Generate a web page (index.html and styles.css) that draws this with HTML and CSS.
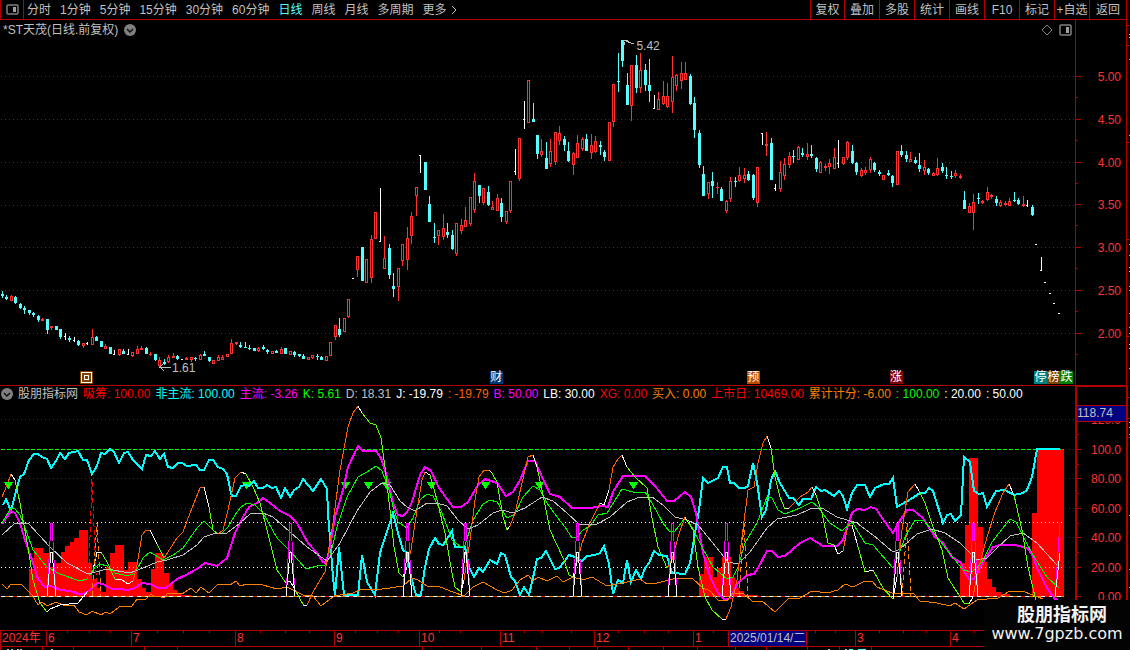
FILE: index.html
```html
<!DOCTYPE html>
<html lang="zh-CN">
<head>
  <meta charset="UTF-8">
  <title>*ST天茂 日线</title>
  <link rel="stylesheet" href="styles.css">
</head>
<body>
  <div class="app">
    <main class="main">
      <nav class="toolbar">
        <button class="layout-btn" aria-label="布局">
          <svg width="13" height="11" viewBox="0 0 13 11"><rect x="1" y="1" width="11" height="9" rx="1" fill="none" stroke="#808080" stroke-width="1.5"/><rect x="7" y="3" width="3" height="5" fill="#a0a0a0"/></svg>
        </button>
        <div class="periods">
          <button>分时</button>
          <button>1分钟</button>
          <button>5分钟</button>
          <button>15分钟</button>
          <button>30分钟</button>
          <button>60分钟</button>
          <button class="active">日线</button>
          <button>周线</button>
          <button>月线</button>
          <button>多周期</button>
          <button class="more">更多
            <svg width="6" height="10" viewBox="0 0 6 10"><path d="M1 1l4 4-4 4" fill="none" stroke="#c0c0c0"/></svg>
          </button>
        </div>
        <div class="tools">
          <button>复权</button>
          <button>叠加</button>
          <button>多股</button>
          <button>统计</button>
          <button>画线</button>
          <button>F10</button>
          <button>标记</button>
          <button>+自选</button>
          <button>返回</button>
        </div>
      </nav>

      <div class="title-row">
        <div class="title">
          <h1>*ST天茂(日线.前复权)</h1>
          <button class="round" aria-label="展开">
            <svg width="12" height="12" viewBox="0 0 12 12"><circle cx="6" cy="6" r="6" fill="#808080"/><path d="M3 5l3 3 3-3" fill="none" stroke="#101010" stroke-width="1.5"/></svg>
          </button>
          <div class="title-icons">
            <svg width="12" height="12" viewBox="0 0 12 12"><path d="M6 1l5 5-5 5-5-5z" fill="none" stroke="#808080"/></svg>
            <svg width="13" height="12" viewBox="0 0 13 12"><rect x="1" y="1" width="11" height="10" rx="1" fill="none" stroke="#808080" stroke-width="1.5"/><rect x="7" y="3" width="3" height="6" fill="#a0a0a0"/></svg>
          </div>
        </div>
        <div></div>
      </div>

      <section class="panel">
        <div class="plot">
          <svg id="kline" class="kline" viewBox="0 38 1075 347" preserveAspectRatio="none"></svg>
          <span class="note high">5.42</span>
          <span class="note low">1.61</span>
          <span class="badge b-hui"><svg width="13" height="13" viewBox="0 0 13 13"><path d="M1.500 1.500h10v10h-10zM4.500 4.500h4v4h-4z" fill="none" stroke="#fff"/></svg></span>
          <span class="badge b-cai">财</span>
          <span class="badge b-yu">预</span>
          <span class="badge b-zhang">涨</span>
          <span class="badge-group"><span class="b-ting">停</span><span class="b-bang">榜</span><span class="b-die">跌</span></span>
        </div>
        <svg id="price-axis" class="axis" width="51" height="347" viewBox="0 38 51 347"></svg>
      </section>

      <section class="panel indicator">
        <div class="plot">
          <div class="legend">
            <button class="round" aria-label="指标菜单">
              <svg width="12" height="12" viewBox="0 0 12 12"><circle cx="6" cy="6" r="6" fill="#808080"/><path d="M3 5l3 3 3-3" fill="none" stroke="#101010" stroke-width="1.5"/></svg>
            </button>
            <span>股朋指标网</span>
            <span class="red">吸筹: 100.00</span>
            <span class="cyan">非主流: 100.00</span>
            <span class="magenta">主流: -3.26</span>
            <span class="green">K: 5.61</span>
            <span>D: 18.31</span>
            <span class="white">J: -19.79</span>
            <span class="flame">: -19.79</span>
            <span class="magenta">B: 50.00</span>
            <span class="white">LB: 30.00</span>
            <span class="red">XG: 0.00</span>
            <span class="orange">买入: 0.00</span>
            <span class="red">上市日: 10469.00</span>
            <span class="orange">累计计分: -6.00</span>
            <span class="green">: 100.00</span>
            <span class="white">: 20.00</span>
            <span class="white">: 50.00</span>
          </div>
          <svg id="osc" class="osc" viewBox="0 402 1075 228" preserveAspectRatio="none"></svg>
        </div>
        <div class="osc-axis">
          <svg id="osc-scale" class="axis" width="51" height="244" viewBox="0 386 51 244"></svg>
          <span class="cursor-value">118.74</span>
        </div>
      </section>

      <div class="time-axis">
        <svg id="ticks" class="ticks" viewBox="0 0 1126 3" preserveAspectRatio="none"></svg>
        <span>2024年</span>
        <span>6</span>
        <span>7</span>
        <span>8</span>
        <span>9</span>
        <span>10</span>
        <span>11</span>
        <span>12</span>
        <span>1</span>
        <span class="cursor-date">2025/01/14/二</span>
        <span></span>
        <span>3</span>
        <span>4</span>
      </div>
      <svg id="tabs-edge" class="tabs-edge" viewBox="0 0 1126 3" preserveAspectRatio="none"></svg>
    </main>
    <svg id="side" class="side" width="4" height="650" viewBox="0 0 4 650"></svg>
  </div>

  <div class="watermark">
    <strong>股朋指标网</strong>
    <span>www.7gpzb.com</span>
  </div>

  <script src="chart.js"></script>
</body>
</html>
```

FILE: styles.css
```css
* {
  box-sizing: border-box;
  margin: 0;
  padding: 0;
}
body {
  background: #000;
  color: #c0c0c0;
  font-family: "Liberation Sans", "Noto Sans CJK SC", sans-serif;
  font-size: 12px;
  line-height: 16px;
}
button {
  background: none;
  border: 0;
  color: inherit;
  font: inherit;
  white-space: nowrap;
}
svg {
  display: block;
  shape-rendering: crispEdges;
}
button svg, .title-icons svg {
  shape-rendering: auto;
}
.app {
  display: grid;
  grid-template-columns: minmax(0, 1fr) 4px;
  position: relative;
}

/* top bar */
.toolbar {
  display: flex;
  height: 20px;
  border-bottom: 1px solid #b00000;
}
.layout-btn {
  display: flex;
  align-items: center;
  justify-content: center;
  width: 24px;
  border-left: 1px solid #b00000;
  border-right: 1px solid #b00000;
}
.periods {
  display: flex;
  gap: 9px;
  padding-left: 3px;
}
.periods .active {
  color: #54ffff;
}
.periods .more {
  display: flex;
  align-items: center;
  gap: 4px;
}
.tools {
  display: flex;
  margin-left: auto;
}
.tools button {
  width: 35px;
  border-left: 1px solid #b00000;
  text-align: center;
}
.tools button:first-child {
  width: 34px;
}
.tools button:last-child {
  width: 37px;
}

/* title */
.title-row {
  display: grid;
  grid-template-columns: minmax(0, 1fr) 50px;
  height: 18px;
}
.title {
  display: flex;
  align-items: center;
  gap: 6px;
  padding: 2px 3px 0 3px;
  border-right: 1px solid #b00000;
}
.title h1 {
  font-size: 12px;
  font-weight: normal;
}
.title-icons {
  display: flex;
  gap: 6px;
  margin-left: auto;
}

/* charts */
.panel {
  display: grid;
  grid-template-columns: minmax(0, 1fr) 51px;
}
.plot {
  position: relative;
}
.kline {
  width: 100%;
  height: 347px;
}
.axis text {
  font-size: 12px;
  fill: #ff3232;
  text-anchor: end;
}
.note {
  position: absolute;
}
.high {
  left: 59.2%;
  top: 0;
}
.low {
  left: 16%;
  top: 322px;
}
.badge, .badge-group {
  position: absolute;
  bottom: 1px;
  display: flex;
  color: #fff;
}
.badge, .badge-group span {
  width: 13px;
  height: 13px;
  font-size: 12px;
  line-height: 13px;
  text-align: center;
}
.b-hui { left: 7.45%; background: #804000; }
.b-cai { left: 45.6%; background: #003878; }
.b-yu { left: 69.5%; background: #c04800; }
.b-zhang { left: 82.8%; background: #800000; }
.badge-group { right: 2px; }
.b-ting { background: #008080; }
.b-bang { background: #804000; }
.b-die { background: #008000; }

.indicator {
  border-top: 1px solid #b00000;
}
.legend {
  display: flex;
  align-items: center;
  gap: 5px;
  height: 16px;
  padding-left: 1px;
  overflow: hidden;
  white-space: nowrap;
}
.osc {
  width: 100%;
  height: 228px;
}
.red { color: #ff0000; }
.cyan { color: #00ffff; }
.magenta { color: #ff00ff; }
.green { color: #00ff00; }
.white { color: #ffffff; }
.flame { color: #ff6000; }
.orange { color: #ff8000; }
.osc-axis {
  position: relative;
}
.cursor-value {
  position: absolute;
  top: 19px;
  left: 2px;
  right: 0;
  height: 17px;
  line-height: 15px;
  border-top: 1px solid #b00000;
  border-bottom: 1px solid #b00000;
  background: #000080;
}

/* time scale */
.time-axis {
  position: relative;
  display: grid;
  grid-template-columns: minmax(0, 46fr) minmax(0, 85fr) minmax(0, 104fr) minmax(0, 99fr) minmax(0, 85fr) minmax(0, 81fr) minmax(0, 94fr) minmax(0, 99fr) minmax(0, 35fr) minmax(0, 78fr) minmax(0, 49fr) minmax(0, 95fr) minmax(0, 176fr);
  height: 17px;
  border-top: 1px solid #b00000;
  border-bottom: 1px solid #b00000;
  color: #ff3232;
}
.time-axis span {
  padding-left: 1px;
  border-left: 1px solid #b00000;
  line-height: 15px;
  white-space: nowrap;
}
.time-axis .cursor-date {
  background: #000080;
  color: #c0c0c0;
}
.ticks {
  position: absolute;
  top: 0;
  left: 0;
  width: 100%;
  height: 3px;
}
.tabs-edge {
  width: 100%;
  height: 3px;
}

.watermark {
  position: absolute;
  right: 0;
  top: 600px;
  width: 146px;
  height: 50px;
  padding-top: 5px;
  background: #030303;
  color: #f4f4f4;
  text-align: center;
}
.watermark strong {
  display: block;
  padding-left: 10px;
  font-size: 18px;
  line-height: 20px;
}
.watermark span {
  display: block;
  font-family: "DejaVu Sans", sans-serif;
  font-size: 16px;
  line-height: 18px;
}
```

FILE: chart.js
```js
const LINE = '#b00000';
const UP = '#ff3232';
const DOWN = '#54ffff';

// x high bodyTop bodyBottom low kind (r = up, c = down, w = flat bar with a tick at bodyTop)
const candles = `
2 291 294 296 298 c|6 295 297 299 300 c|11 295 296 301 301 r|15 296 297 303 304 c|20 303 304 308 309 c|24 306 308 310 314 c
29 310 310 313 315 c|33 312 313 315 317 c|38 315 316 320 322 c|42 318 319 321 321 r|47 319 319 330 334 c|51 326 326 328 330 r
56 326 326 330 330 c|60 329 329 337 339 c|65 333 336 336 340 w|69 336 338 340 342 c|74 337 340 340 342 w|78 340 341 345 346 c
83 343 343 346 348 r|87 342 343 343 345 w|92 329 337 345 345 r|96 336 337 341 341 c|101 341 341 347 347 c|105 344 346 349 349 r
110 347 347 354 354 c|114 350 354 354 355 w|119 349 349 355 356 r|123 349 351 354 354 c|128 349 354 354 355 w|132 352 352 356 357 r
137 346 349 354 354 r|141 346 348 350 350 r|146 347 348 354 354 c|150 352 354 355 356 r|155 354 354 360 361 c|159 357 360 366 367 r
164 359 362 364 365 c|168 355 357 362 363 r|173 353 356 358 358 r|177 355 356 359 360 c|182 359 359 359 360 w|186 357 358 360 360 r
191 357 357 360 362 r|195 357 358 359 361 c|200 354 355 360 360 r|204 351 354 356 356 c|209 357 357 361 362 c|213 360 360 364 364 r
218 355 357 361 361 r|222 355 357 360 360 r|227 354 354 357 357 r|231 339 343 354 354 r|236 342 342 344 345 r|240 342 345 347 348 c
245 342 347 348 348 c|249 345 348 349 350 c|254 348 348 351 351 c|258 347 348 351 352 r|263 345 347 349 350 c|267 349 350 352 354 c
272 351 351 354 354 r|276 350 351 353 353 c|281 347 349 354 354 r|285 348 348 354 354 c|290 351 351 355 355 r|294 351 352 355 357 c
299 354 354 356 357 c|303 354 356 359 359 c|308 357 357 360 360 r|312 355 355 358 359 r|317 354 356 357 360 c|321 356 357 360 360 c
326 356 356 361 361 r|330 342 342 356 356 r|335 325 325 337 340 r|339 318 329 335 337 c|344 318 318 332 332 r|348 299 299 317 318 r
353 278 278 278 279 w|357 256 256 270 277 r|362 247 247 281 281 c|366 259 259 283 283 r|371 235 239 278 283 r|375 212 212 239 239 r
380 188 241 241 242 w|384 236 258 269 269 r|389 244 248 275 279 c|393 273 286 289 297 c|398 268 268 287 301 r|402 244 244 261 266 r
407 227 238 260 270 r|411 212 216 236 244 r|416 187 187 196 216 r|420 155 155 155 173 w|425 162 162 190 190 c|429 196 204 222 222 c
434 223 237 238 243 c|438 230 230 236 245 r|443 214 228 237 240 r|447 223 232 235 238 c|452 230 235 249 250 c|456 223 223 254 256 r
461 219 225 231 234 r|465 207 220 227 227 r|470 197 197 224 226 r|474 173 181 210 213 r|479 185 185 196 203 c|483 188 188 203 205 r
488 186 192 205 206 c|492 201 207 210 210 r|497 194 198 211 211 r|501 198 203 217 222 c|506 211 211 222 224 r|510 181 181 211 213 r
515 149 171 171 175 w|519 138 138 179 181 r|524 101 119 119 129 w|528 80 80 123 123 r|533 103 119 122 122 c|537 135 135 154 159 c
541 139 151 155 157 r|546 142 158 169 169 c|550 139 151 164 167 r|555 132 132 162 165 r|559 126 133 141 145 r|564 136 139 145 151 c
568 142 151 161 162 c|573 152 153 165 175 r|577 135 143 158 158 r|582 137 139 149 151 r|586 134 139 151 151 c|591 134 145 153 159 r
595 136 141 152 153 r|600 141 145 147 155 c|604 150 152 157 161 c|609 122 122 161 161 r|613 84 84 122 127 r|618 53 81 82 92 c
622 40 40 61 67 c|627 73 85 105 105 c|631 65 65 106 121 r|636 55 65 88 93 c|640 53 70 88 93 r|645 64 70 85 91 c
649 59 85 91 102 c|654 95 108 108 109 w|658 92 99 110 110 r|663 81 96 104 105 r|667 83 96 107 108 r|672 56 77 102 113 r
676 74 75 86 91 r|681 62 73 81 89 r|685 62 73 80 80 r|690 74 76 104 105 c|694 97 103 130 138 c|699 130 133 165 168 c
703 166 174 196 196 c|708 182 182 194 199 r|712 172 181 186 198 c|717 182 187 188 194 r|721 187 189 201 201 c|726 200 201 211 213 r
730 177 181 199 202 r|735 177 181 182 187 c|739 167 175 181 182 r|744 168 175 179 183 r|748 171 174 180 181 c|753 174 175 198 200 c
757 167 167 203 207 r|762 133 133 133 145 w|766 132 144 146 156 r|771 138 143 180 180 c|775 184 188 188 191 w|780 161 172 189 192 r
784 158 164 176 180 r|789 152 156 165 168 r|793 150 156 157 163 c|798 146 147 160 160 r|802 148 153 155 157 c|807 143 154 157 160 r
811 145 154 156 158 c|816 157 158 169 172 c|820 161 162 173 173 r|825 164 166 168 171 r|829 159 163 167 174 r|834 148 157 169 169 r
838 140 163 163 168 w|843 157 157 164 165 r|847 141 142 158 160 r|852 145 151 163 164 c|856 162 163 172 175 c|861 168 170 176 177 r
865 167 170 173 175 r|870 157 159 170 173 r|874 162 163 170 172 c|879 170 172 174 176 c|883 175 175 180 180 r|888 170 173 175 176 c
892 175 176 183 187 c|897 151 151 185 185 r|901 145 151 155 157 c|906 151 155 159 162 c|910 152 159 162 162 r|915 157 160 163 164 c
919 153 165 169 172 c|924 160 167 171 175 r|928 168 169 173 175 c|933 172 173 176 176 r|937 158 168 175 176 r|942 163 167 171 173 c
946 167 175 176 179 c|951 171 176 177 179 c|955 170 173 176 178 r|960 174 176 178 179 r|964 191 200 209 209 c|969 203 206 213 213 r
973 194 202 213 230 r|978 193 198 199 204 c|982 200 201 203 204 r|987 187 192 200 201 r|991 194 195 197 199 r|996 196 199 203 206 c
1000 200 202 206 207 r|1005 201 203 205 206 r|1009 198 201 206 206 r|1014 192 200 201 202 c|1018 198 200 204 205 c|1023 196 204 206 207 r
1027 200 205 205 207 w|1032 205 207 215 216 c|1036 244 244 244 245 w|1041 257 270 270 271 w|1045 282 282 282 283 w|1050 293 293 293 294 w
1054 303 303 303 304 w|1059 313 313 313 314 w`;

const rect = (x, y, w, h, fill) => `<rect x="${x}" y="${y}" width="${w}" height="${h}" fill="${fill}"/>`;
const poly = (pts, color, width = 1, extra = '') =>
  `<polyline points="${pts}" fill="none" stroke="${color}" stroke-width="${width}" ${extra}/>`;
const hline = (y, w, color, dash) =>
  `<path d="M1 ${y + 0.5}H${w}" stroke="${color}" stroke-dasharray="${dash}"/>`;

function drawCandle(row) {
  const p = row.trim().split(' ');
  const [x, high, top, bottom, low] = p.map(Number);
  if (p[5] === 'w') {
    return rect(x, high, 1, low - high, '#fff') + rect(x - 1, top, 2, 1, '#fff');
  }
  const color = p[5] === 'r' ? UP : DOWN;
  const h = Math.max(bottom - top, 1);
  let out = rect(x, high, 1, low - high, color) + rect(x - 1, top, 3, h, color);
  if (p[5] === 'r' && h > 2) {
    out += rect(x, top + 1, 1, h - 2, '#000');
  }
  return out;
}

// price chart
let k = '';
[76, 119, 162, 205, 247, 290, 333].forEach(y => k += hline(y, 1075, LINE, '1 3'));
candles.trim().split(/[|\n]/).forEach(row => k += drawCandle(row));
k += poly('634,44 623,40 628,40 623,40 625,45', '#c0c0c0');
k += poly('171,367 160,367 164,363 160,367 164,371', '#c0c0c0');
document.getElementById('kline').innerHTML = k;

let a = rect(0, 38, 1, 347, LINE);
['5.00', '4.50', '4.00', '3.50', '3.00', '2.50', '2.00'].forEach((t, i) => {
  const y = Math.round(76 + i * 42.8);
  a += rect(0, y, 6, 1, LINE) + rect(0, y + 21, 3, 1, LINE);
  a += `<text x="46" y="${y + 5}">${t}</text>`;
});
document.getElementById('price-axis').innerHTML = a;

// oscillator
const cyan = '3,505 6,499 11,511 15,495 20,477 24,474 29,460 34,454 38,454 42,457 47,459 51,468 56,461 60,453 65,459 69,453 78,451 83,460 87,460 92,474 97,466 101,453 105,454 110,449 114,452 119,463 124,453 128,452 133,460 142,469 146,455 151,456 155,451 160,459 164,454 168,467 173,468 178,463 182,463 187,466 196,465 200,470 204,470 209,460 213,460 218,467 223,469 227,474 231,493 232,496 236,496 241,486 245,485 249,486 254,481 258,488 263,488 267,485 272,488 276,487 281,498 285,488 290,497 294,490 299,487 303,479 313,491 321,479 327,489 328,513 333,577 335,595 339,547 344,595 358,595 362,555 367,582 375,595 380,553 393,513 398,533 403,550 407,553 411,577 416,595 421,595 425,567 429,549 435,538 439,544 443,545 447,539 452,531 455,547 465,547 469,567 474,577 479,568 483,572 490,560 497,564 501,553 505,555 511,577 515,581 520,595 524,587 529,595 533,578 537,559 541,558 546,551 555,569 559,568 564,562 569,555 575,557 582,561 587,556 595,555 600,553 604,546 609,564 613,594 618,580 623,583 627,560 631,582 636,570 641,579 645,568 649,563 654,551 659,555 667,556 672,573 685,574 690,563 695,533 699,510 703,478 708,483 718,478 723,467 727,467 730,483 734,483 739,488 745,488 748,486 753,463 757,482 762,517 766,510 771,480 775,471 780,483 789,498 793,498 799,505 803,499 811,499 816,487 821,491 825,490 834,496 839,491 843,496 847,509 852,493 857,485 865,485 870,497 875,488 884,484 889,484 893,478 897,507 902,504 911,499 920,493 925,493 929,488 933,491 943,523 947,515 951,514 955,521 961,515 964,457 970,462 974,491 979,494 983,493 987,507 996,491 1005,490 1014,495 1023,493 1027,490 1032,477 1037,449 1060,449';
const magenta = '2,524 7,517 11,511 15,513 20,523 24,537 32,560 38,579 45,587 51,586 60,590 70,591 79,594 83,594 89,591 97,583 103,584 112,589 120,589 128,590 135,588 142,583 150,584 158,588 166,588 177,579 186,575 197,569 205,563 217,566 227,558 235,533 243,517 249,507 257,503 263,498 270,503 280,511 290,516 297,523 308,543 317,553 323,562 326,563 330,547 335,517 343,490 348,467 358,446 363,451 376,451 381,458 387,477 393,503 398,515 403,516 407,512 412,502 420,475 425,467 431,471 439,488 453,507 461,507 468,502 478,485 485,479 497,483 506,496 513,492 520,480 528,461 535,461 542,477 550,494 560,497 572,508 590,508 602,506 608,507 613,492 623,476 645,476 655,486 667,501 674,501 685,492 691,497 696,513 703,553 710,577 718,593 725,600 730,598 738,583 747,575 754,574 758,568 767,551 772,551 778,557 785,556 800,543 810,538 823,546 837,546 843,540 852,513 857,509 865,510 871,507 876,509 885,522 893,533 899,522 907,510 913,510 923,518 935,537 943,543 952,557 961,563 965,573 969,579 974,579 983,562 993,547 1000,545 1015,545 1027,548 1032,554 1038,570 1047,588 1055,599 1058,600';
const green = '2,523 11,508 15,509 20,515 27,533 33,550 47,567 60,574 80,581 87,579 95,567 100,564 107,566 115,573 128,576 135,573 143,558 150,552 163,560 173,555 183,548 197,528 204,521 210,527 217,534 222,533 228,527 235,515 241,507 247,503 255,505 263,513 277,538 290,551 306,569 317,566 325,565 330,557 337,527 347,497 358,477 367,472 376,466 382,471 390,493 393,507 398,522 407,528 413,518 420,500 427,494 433,496 442,513 452,540 461,547 465,545 473,520 483,504 490,500 497,502 507,518 515,514 523,497 533,486 540,490 547,503 557,517 565,527 572,538 577,537 583,530 590,526 598,515 607,513 617,497 622,489 633,492 645,492 652,503 663,523 669,531 675,531 685,518 692,527 702,547 713,567 727,579 733,577 738,567 745,543 752,531 757,523 767,497 772,498 778,510 785,514 800,508 812,502 818,507 830,523 842,531 852,522 865,543 873,545 893,568 898,557 905,537 915,520 923,520 932,530 947,550 963,570 972,572 982,562 992,542 1010,519 1016,522 1025,540 1033,555 1047,577 1059,588';
const gray = '2,535 15,523 28,523 50,547 67,563 88,574 107,569 130,573 143,568 157,562 167,560 183,555 197,545 204,537 213,534 227,533 240,523 250,514 263,513 273,517 290,532 307,547 327,561 340,543 357,511 370,492 382,483 390,485 400,501 407,507 415,511 427,503 437,503 447,506 458,520 468,529 478,525 493,513 502,510 513,513 525,508 542,497 553,501 567,513 580,525 597,524 610,517 627,502 640,497 652,497 663,505 675,517 687,520 698,525 712,542 728,562 738,564 750,552 767,528 777,519 797,515 810,509 822,508 837,517 857,523 873,535 893,552 900,549 917,534 932,529 945,533 960,543 977,560 987,558 998,547 1010,536 1023,533 1037,543 1057,565';
const score = '2,584 7,589 11,584 21,584 32,595 38,605 42,602 47,606 56,602 63,605 74,605 79,612 87,615 92,611 101,615 106,612 110,614 119,607 132,606 137,599 146,599 151,594 155,597 159,596 164,598 168,593 182,594 191,588 196,593 201,587 209,593 218,584 230,585 236,581 240,586 247,584 263,585 277,589 287,587 295,591 303,595 313,596 321,606 334,596 353,593 362,589 382,589 390,588 403,586 412,578 418,580 427,586 440,587 453,592 464,596 473,587 483,582 497,590 505,593 512,590 520,580 528,575 533,581 538,577 547,581 557,576 563,582 573,577 583,580 592,577 607,586 627,582 640,579 647,584 657,583 677,578 693,579 703,588 710,591 718,600 727,601 733,593 743,593 752,601 762,601 775,612 788,599 800,598 812,591 827,593 838,590 845,584 853,587 865,581 872,581 877,587 892,593 913,593 920,601 937,603 950,606 955,603 964,609 977,600 998,598 1010,591 1025,592 1043,599';

// J line: o = rising, l = falling, w = turning
const jLine = `
o 2,497 7,485 11,474|w 11,474 15,480|l 15,480 20,503 28,547 33,580 40,603 47,612|w 47,612 50,609 60,605 78,603 88,591|w 93,570 97,552 101,552
l 101,552 107,562 115,579|w 115,579 122,580 128,584 133,581|o 133,581 137,565 142,535 146,530 150,530|w 150,530 157,544|l 157,544 164,558
o 164,558 177,538 183,532 190,513 200,488 204,487|w 204,487 209,507|l 209,507 213,530 218,534|o 218,534 223,530 228,510 235,478 241,472
w 241,472 246,474|l 246,474 253,487 260,503 267,530 277,570 286,583|w 286,583 290,581 294,588|l 294,588 304,606|w 304,606 307,605
o 307,605 313,592 325,572 333,523 340,470 348,427 353,413 358,406|w 358,406 362,413|l 362,413 370,423 376,425 381,438 385,467 390,510 394,547 399,573 403,577
w 403,577 407,567|o 407,567 411,550 417,510 422,480 425,472|w 425,472 430,475|l 430,475 437,500 445,533 452,573 455,587 461,592
w 461,592 464,580|o 464,580 470,540 475,500 479,477 484,470 489,470|w 489,470 492,473|l 492,473 497,482 503,517 507,530|w 507,530 510,526
o 510,526 515,513 522,483 528,457 533,455|w 533,455 537,467|l 537,467 543,495 550,530 557,545 564,560 569,575 573,577|w 573,577 577,562
o 577,562 582,543 590,523 600,503|w 600,503 604,505 609,490|o 609,490 613,467 618,459 622,455|w 622,455 627,467
l 627,467 635,477 647,488 652,518 658,547 667,568|o 667,568 672,560 678,537 685,517|w 685,517 688,522|l 688,522 693,530 698,567 705,597 712,610 722,619
w 722,619 726,619|o 726,619 731,607 737,580 742,537 748,490 754,487 758,463 763,443 767,436|w 767,436 771,448|l 771,448 775,477 780,497 785,509
w 785,509 789,508|o 789,508 800,497 808,492 812,487|w 812,487 816,495|l 816,495 822,513 828,543 834,545|w 834,545 838,554 843,551
o 843,551 848,525 852,525|w 852,525 857,543|l 857,543 865,572|w 865,572 873,570|l 873,570 883,588 893,599|w 893,599 897,577
o 897,577 902,530 908,492 915,484|w 915,484 919,491|l 919,491 925,503 933,527 942,550 948,578 957,592 964,603 969,604|w 969,604 973,597
o 973,597 978,570 987,537 995,512 1003,493 1009,484|w 1009,484 1014,495|l 1014,495 1022,530 1028,567 1036,601`;
const jColors = { o: '#ff6000', l: '#60ff00', w: '#ffffff' };

let o = '';
[419, 449, 478, 508, 537, 567].forEach(y => o += hline(y, 1075, LINE, '1 3'));
o += '<path fill="#ff0000" d="M29 596V569H34V548H43V553H50V567H56V563H61V552H65V546H70V542H74V538H79V530H88V563H92V579H97V588H101V592H106V567H110V553H115V545H124V570H128V562H137V579H142V588H146V592H151V569H155V553H164V573H169V584H173V590H177V593H182V595H191V596Z'
  + 'M699 596V574H704V557H713V577H717V568H722V557H731V577H735V588H739V591H744V595H758V596Z'
  + 'M960 596V563H965V525H969V458H978V527H983V562H987V579H992V587H996V592H1001V594H1010V596ZM1032 596V513H1037V449H1064V596Z"/>';
o += hline(449, 1064, '#00ff00', '4 2');
o += hline(522, 1064, '#ffffff', '1 3');
o += hline(567, 1064, '#ffffff', '1 3');
o += hline(596, 1064, '#ff8000', 'none') + hline(596, 1064, '#ff0000', '4 8') + hline(596, 1064, '#ffffff', '4 4');
[8, 246, 345, 368, 386, 431, 485, 539, 633].forEach(x => {
  o += `<path d="M${x - 4} 482h9l-4 7h-1z" fill="#00ff00"/>`;
});
o += poly(cyan, '#00ffff', 2);
o += poly(magenta, '#ff00ff', 2);
o += poly(green, '#00ff00');
o += poly(gray, '#c0c0c0');
o += poly(score, '#ff8000');
jLine.trim().split(/[|\n]/).forEach(seg => o += poly(seg.slice(2), jColors[seg[0]]));
[51, 290, 407, 465, 577, 672, 726, 897, 973].forEach(x => {
  o += poly(`${x - 4},596 ${x},523 ${x + 1},523 ${x + 5},596`, '#ff00ff');
  o += poly(`${x - 4},596 ${x},552 ${x + 1},552 ${x + 5},596`, '#ffffff');
});
o += poly('1055,596 1060,523', '#ff00ff') + poly('1055,596 1060,553', '#ffffff');
o += poly('88,596 92,479 97,596', '#ff0000', 1, 'stroke-dasharray="5 3"');
[97, 744, 907].forEach(x => {
  o += poly(`${x - 5},596 ${x},523 ${x + 4},596`, '#ff8000', 1, 'stroke-dasharray="5 3"');
});
document.getElementById('osc').innerHTML = o;

let s = rect(0, 386, 2, 244, LINE) + rect(0, 386, 51, 1, LINE);
[['120.0', 419], ['100.0', 449], ['80.00', 478], ['60.00', 508], ['40.00', 537], ['20.00', 567], ['0.00', 596]].forEach(([t, y]) => {
  s += rect(2, y, 4, 1, LINE) + rect(2, y + 15, 2, 1, LINE) + `<text x="46" y="${y + 5}">${t}</text>`;
});
document.getElementById('osc-scale').innerHTML = s;

// small ticks and the edges of the neighbouring panes
document.getElementById('ticks').innerHTML =
  [67, 89, 110, 157, 183, 209, 260, 285, 309, 355, 377, 398, 439, 460, 524, 542, 571, 618, 644, 668, 713, 815, 835, 879, 903, 926, 974]
    .map(x => rect(x, 0, 1, 2, LINE)).join('');
document.getElementById('tabs-edge').innerHTML =
  [0, 42, 73, 144, 177, 422, 481, 536, 569, 597, 628, 663, 697, 735, 766, 807, 839, 871]
    .map(x => rect(x, 0, 1, 3, LINE)).join('')
  + [7, 11, 17, 20, 51, 828, 845].map(x => rect(x, 2, 2, 1, '#c0c0c0')).join('')
  + rect(849, 2, 4, 1, DOWN) + rect(858, 2, 8, 1, DOWN);
document.getElementById('side').innerHTML =
  rect(0, 0, 1, 650, LINE) + rect(0, 386, 2, 264, LINE)
  + [25, 45, 142, 239, 336, 397, 418, 437].map(y => rect(1, y, 3, 1, LINE)).join('')
  + [34, 37, 59, 135, 244, 255, 267, 271, 286, 290, 313, 327, 333, 344, 348, 368, 422, 427, 434, 515, 569, 587].map(y => rect(3, y, 1, 1, '#c0c0c0')).join('');
```
